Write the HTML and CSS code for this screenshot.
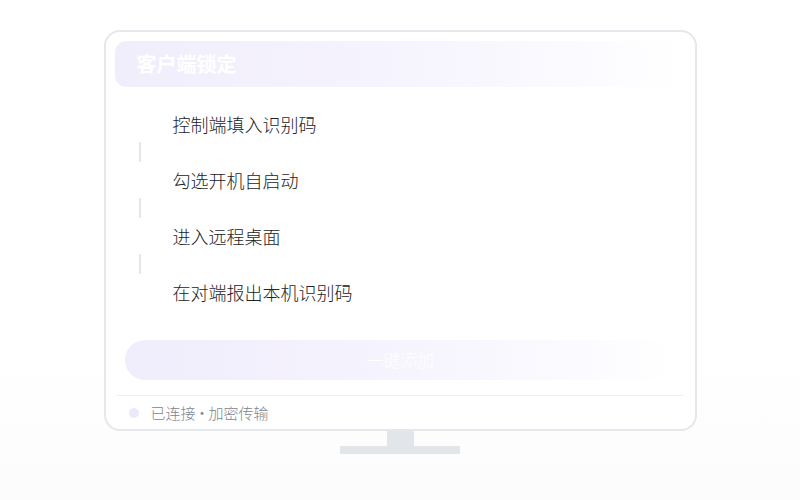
FILE: index.html
```html
<!DOCTYPE html>
<html lang="zh">
<head>
<meta charset="utf-8">
<title>客户端锁定</title>
<link rel="stylesheet" href="styles.css">
</head>
<body>
<div class="scene">
  <div class="monitor">
    <div class="header"><span class="title">客户端锁定</span></div>
    <div class="steps">
      <div class="step">控制端填入识别码</div>
      <div class="connector"></div>
      <div class="step">勾选开机自启动</div>
      <div class="connector"></div>
      <div class="step">进入远程桌面</div>
      <div class="connector"></div>
      <div class="step">在对端报出本机识别码</div>
    </div>
    <div class="button">一键添加</div>
    <div class="separator"></div>
    <div class="footer">
      <span class="dot"></span>
      <span class="status">已连接<span class="middot">·</span>加密传输</span>
    </div>
  </div>
  <div class="neck"></div>
  <div class="base"></div>
</div>
</body>
</html>
```

FILE: styles.css
```css
* { box-sizing: border-box; }
html, body { margin: 0; padding: 0; }
body {
  width: 800px;
  height: 500px;
  overflow: hidden;
  background: linear-gradient(180deg, #ffffff 0%, #ffffff 70%, #fcfcfd 100%);
  font-family: "Noto Sans CJK SC", "Noto Sans", sans-serif;
}
.scene {
  padding-top: 30px;
  display: flex;
  flex-direction: column;
  align-items: center;
}
.monitor {
  width: 593px;
  height: 401px;
  border: 2px solid #e4e7eb;
  border-radius: 16px;
  background: #ffffff;
  padding: 9px 9px 0 9px;
  display: flex;
  flex-direction: column;
}
.header {
  height: 46px;
  border-radius: 11px;
  background: linear-gradient(90deg, #f1eefc 0%, #f5f3fd 45%, #fbfaff 80%, rgba(255,255,255,0) 100%);
  display: flex;
  align-items: center;
  padding-left: 22px;
}
.title {
  color: #ffffff;
  font-size: 20px;
  font-weight: 700;
  line-height: 1;
}
.steps {
  margin-top: 25px;
  display: flex;
  flex-direction: column;
}
.step {
  height: 24px;
  line-height: 24px;
  padding-left: 58px;
  font-size: 18px;
  font-weight: 300;
  color: #222326;
}
.connector {
  width: 2px;
  height: 20px;
  margin: 6px 0 6px 24px;
  background: #e6e7ec;
}
.button {
  margin: 36px 10px 0 10px;
  height: 40px;
  border-radius: 20px;
  background: linear-gradient(90deg, #f0edfc 0%, #f5f3fd 45%, #fbfaff 80%, rgba(255,255,255,0) 100%);
  color: #ffffff;
  font-size: 17px;
  font-weight: 300;
  display: flex;
  align-items: center;
  justify-content: center;
  padding-bottom: 2px;
}
.separator {
  margin: 15px 2px 0 1px;
  height: 1px;
  background: #eef0f3;
}
.footer {
  flex: 1;
  display: flex;
  align-items: center;
  padding-left: 14px;
  gap: 12px;
}
.dot {
  width: 10px;
  height: 10px;
  border-radius: 50%;
  background: #ece9fb;
}
.status {
  font-size: 15px;
  font-weight: 300;
  color: #80848d;
}
.middot {
  margin: 0 -1px;
}
.neck {
  width: 27px;
  height: 15px;
  background: #e2e5ea;
}
.base {
  width: 120px;
  height: 8px;
  background: #e2e5ea;
}
```
